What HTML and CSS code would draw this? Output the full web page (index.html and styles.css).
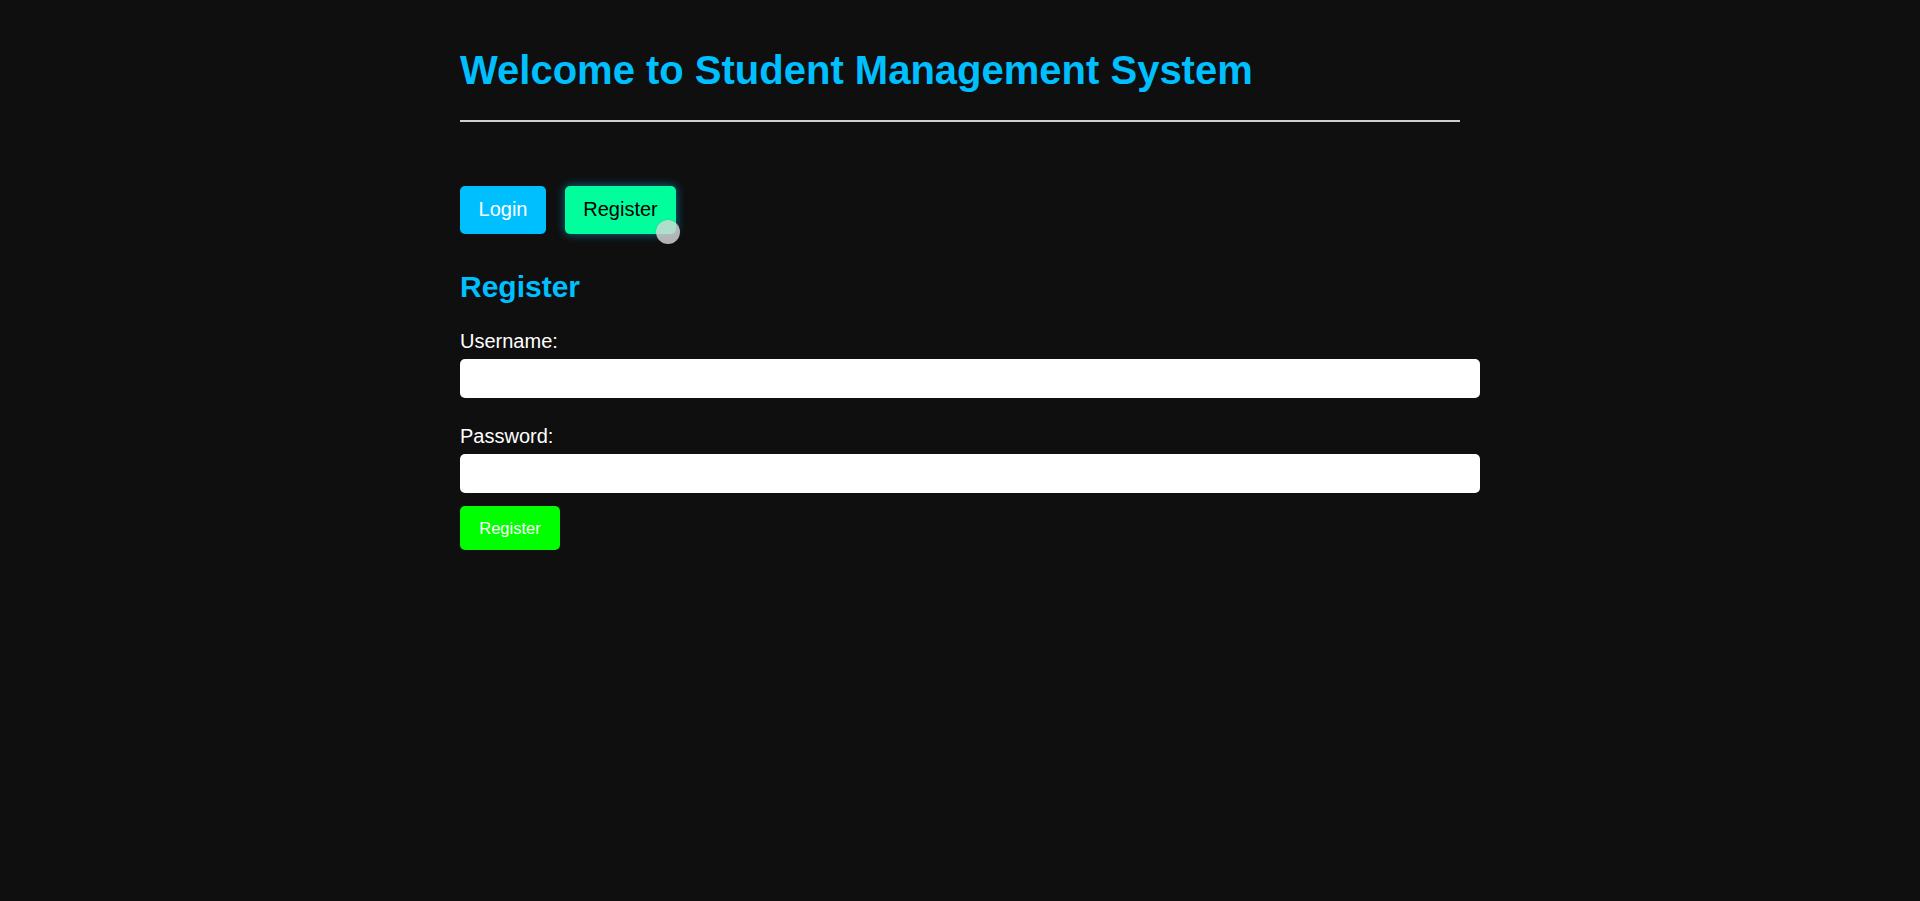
FILE: index.html
```html
<!DOCTYPE html>
<html lang="en">
<head>
<meta charset="utf-8">
<title>Student Management System</title>
<link rel="stylesheet" href="styles.css">
</head>
<body>
<div class="container">
  <h1 class="title">Welcome to Student Management System</h1>
  <hr class="divider">
  <div class="tabs">
    <button class="tab tab-login">Login</button>
    <button class="tab tab-register">Register<span class="cursor"></span></button>
  </div>
  <h2 class="section-title">Register</h2>
  <form class="form">
    <label class="label" for="u">Username:</label>
    <input class="input" id="u" type="text">
    <label class="label label-second" for="p">Password:</label>
    <input class="input input-last" id="p" type="password">
    <button type="button" class="submit">Register</button>
  </form>
</div>
</body>
</html>
```

FILE: styles.css
```css
html, body {
  margin: 0;
  padding: 0;
  background: #0f0f0f;
  font-family: "Liberation Sans", Arial, sans-serif;
  color: #ffffff;
}
.container {
  width: 1000px;
  margin: 0 auto;
  padding-top: 47px;
}
.title {
  margin: 0;
  font-size: 40px;
  line-height: 46px;
  font-weight: bold;
  color: #00bfff;
}
.divider {
  margin: 27px 0 0 0;
  height: 0;
  border: none;
  border-top: 2px solid #cfcfcf;
}
.tabs {
  display: flex;
  gap: 19px;
  margin-top: 64px;
}
.tab {
  position: relative;
  border: none;
  border-radius: 5px;
  font-family: "Liberation Sans", Arial, sans-serif;
  font-size: 20px;
  line-height: 23px;
  height: 48px;
  padding: 0 18px 2px 18px;
  cursor: pointer;
}
.tab-login {
  background: #00bfff;
  color: #ffffff;
  width: 86px;
}
.tab-register {
  background: #00ff9c;
  color: #000000;
  width: 111px;
  box-shadow: 0 0 10px rgba(0, 200, 255, 0.55);
}
.cursor {
  position: absolute;
  left: 91px;
  top: 34px;
  width: 24px;
  height: 24px;
  border-radius: 50%;
  background: rgba(215, 215, 215, 0.82);
  box-shadow: 0 0 1px rgba(0, 0, 0, 0.4);
}
.section-title {
  margin: 36px 0 0 0;
  font-size: 30px;
  line-height: 34px;
  font-weight: bold;
  color: #00bfff;
}
.form {
  display: flex;
  flex-direction: column;
  align-items: flex-start;
  margin-top: 26px;
}
.label {
  font-size: 20px;
  line-height: 22px;
  margin-bottom: 7px;
}
.label-second {
  margin-top: 27px;
}
.input {
  box-sizing: content-box;
  width: 1000px;
  height: 19px;
  padding: 10px;
  border: none;
  border-radius: 5px;
  background: #ffffff;
  font-size: 16px;
}
.input-last {
  margin-bottom: 13px;
}
.submit {
  border: none;
  border-radius: 5px;
  background: #00ff00;
  color: #ffffff;
  font-family: "Liberation Sans", Arial, sans-serif;
  font-size: 16.5px;
  height: 44px;
  width: 100px;
  padding: 0;
  cursor: pointer;
}
```
